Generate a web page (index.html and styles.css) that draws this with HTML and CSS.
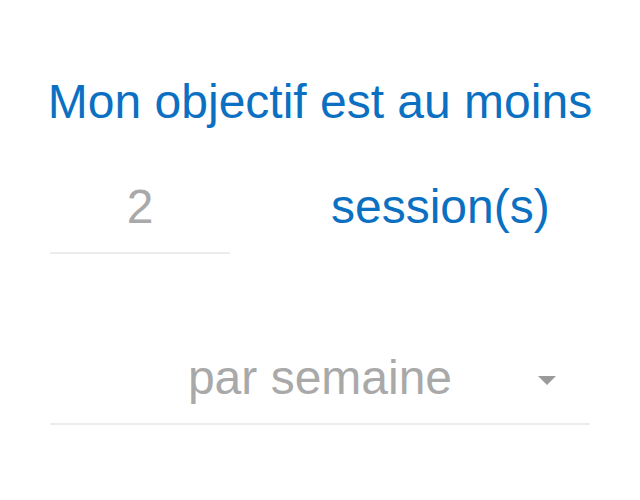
FILE: index.html
```html
<!DOCTYPE html>
<html lang="fr">
<head>
<meta charset="utf-8">
<link rel="stylesheet" href="styles.css">
</head>
<body>
<main class="goal">
  <h1 class="goal-title">Mon objectif est au moins</h1>
  <div class="goal-row">
    <div class="field field-number">2</div>
    <div class="unit">session(s)</div>
  </div>
  <div class="field field-select">
    <span class="select-value">par semaine</span>
    <span class="select-arrow"></span>
  </div>
</main>
</body>
</html>
```
FILE: styles.css
```css
html, body {
  margin: 0;
  padding: 0;
  background: #ffffff;
}
.goal {
  width: 640px;
  box-sizing: border-box;
  padding: 74px 50px 0;
  font-family: "Liberation Sans", Arial, sans-serif;
  font-size: 48px;
  line-height: 56px;
}
.goal-title {
  margin: 0 -30px;
  font-size: 48px;
  font-weight: normal;
  line-height: 56px;
  text-align: center;
  white-space: nowrap;
  color: #0b70c2;
}
.goal-row {
  display: flex;
  align-items: flex-start;
  margin-top: 49px;
}
.field {
  color: #a9a9a9;
  border-bottom: 2px solid #ececef;
}
.field-number {
  width: 180px;
  text-align: center;
  padding-bottom: 17px;
}
.unit {
  margin-left: 101px;
  color: #0b70c2;
}
.field-select {
  position: relative;
  margin-top: 96px;
  text-align: center;
  padding-bottom: 17px;
}
.select-arrow {
  position: absolute;
  right: 34px;
  top: 26px;
  width: 0;
  height: 0;
  border-left: 9px solid transparent;
  border-right: 9px solid transparent;
  border-top: 9px solid #9a9a9a;
}
```
